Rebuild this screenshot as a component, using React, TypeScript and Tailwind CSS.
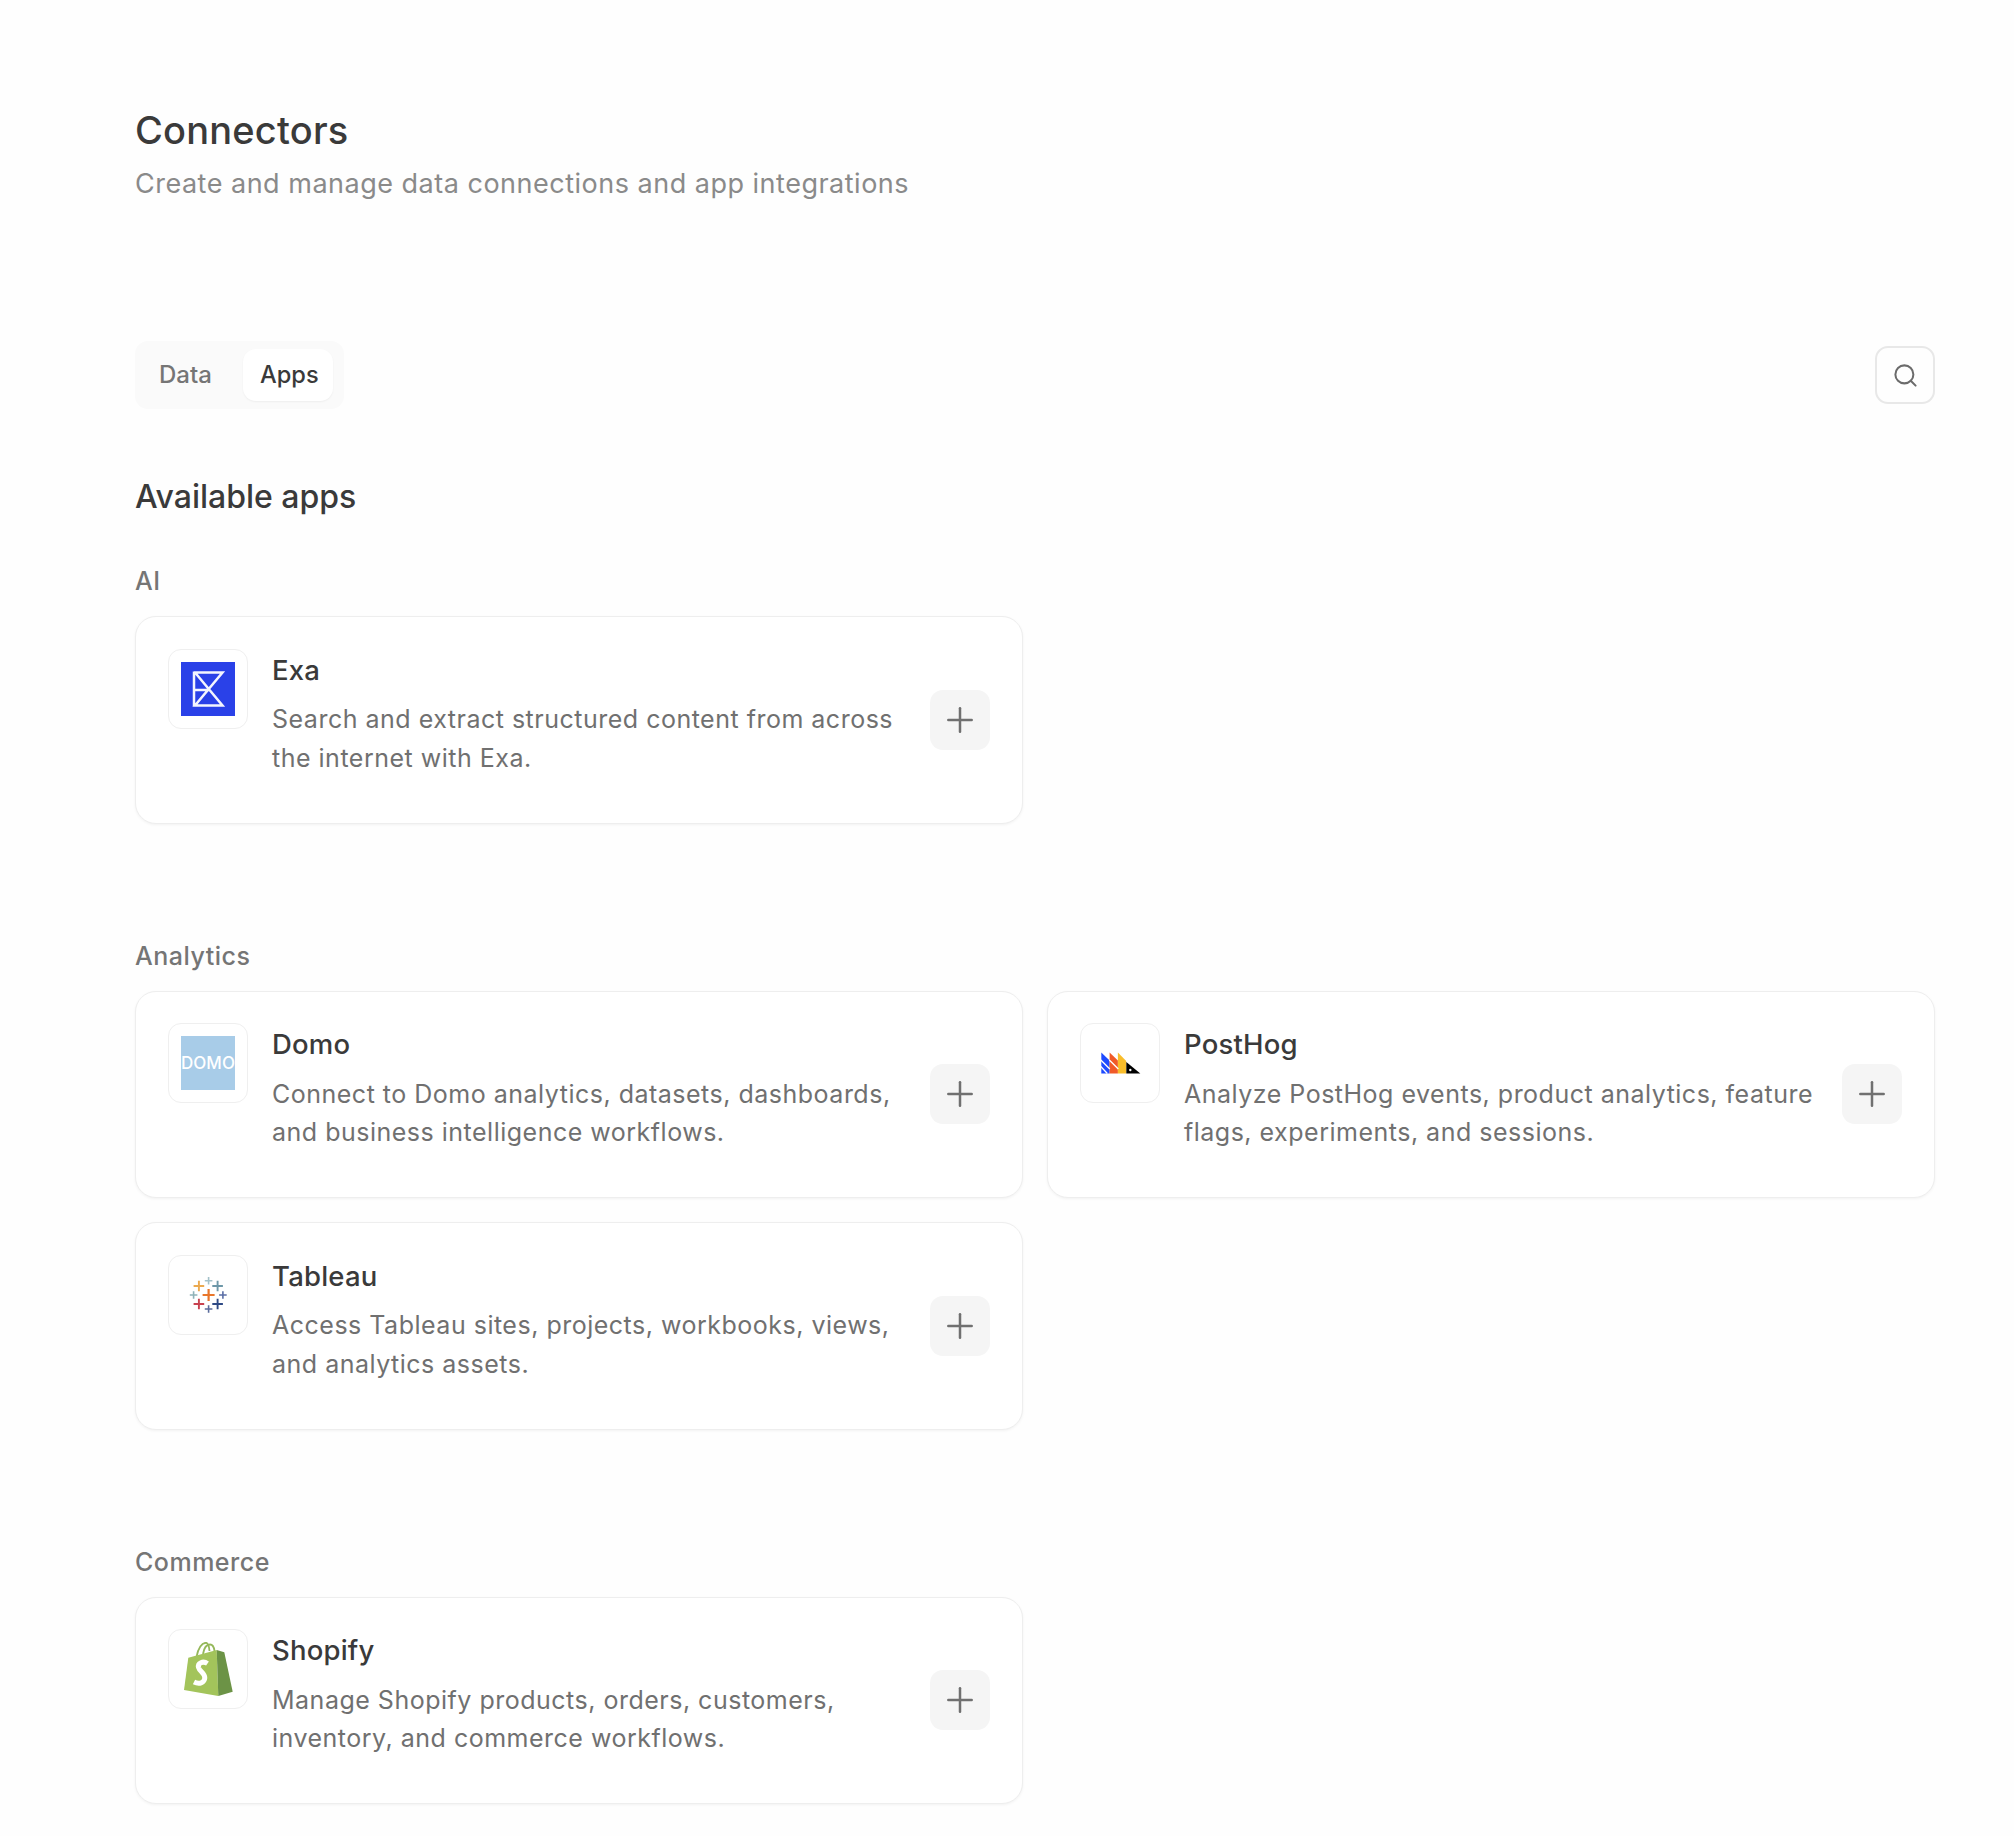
import { Plus, Search } from "lucide-react";
import type { ReactNode } from "react";

function ExaLogo() {
  return (
    <svg viewBox="0 0 54 54" className="h-full w-full">
      <rect width="54" height="54" fill="#2a41e8" />
      <path
        d="M13 10.5H41.5L14 43.5H41.5L14 10.5M13 9.4V44.6M13.5 28H28"
        fill="none"
        stroke="#f4f5fe"
        strokeWidth="2.5"
      />
    </svg>
  );
}

function DomoLogo() {
  return (
    <div className="flex h-full w-full items-center justify-center overflow-hidden bg-[#a8cce8]">
      <span className="text-[17px] leading-none font-medium text-white">DOMO</span>
    </div>
  );
}

function PostHogLogo() {
  return (
    <svg viewBox="-0.8 0 54 54" className="h-full w-full">
      <path d="M7.5 16.5L15.8 24.5V37.5H7.5Z" fill="#1d4aff" />
      <path d="M15.8 16.5L24.1 24.5V37.5H15.8Z" fill="#f05a28" />
      <path d="M24.1 16.5L32.4 25V37.5H24.1Z" fill="#f9bd2b" />
      <path d="M7 24L16 33M7 30.5L13.5 37.5M15.5 24L24.5 33" stroke="#fff" strokeWidth="1.3" />
      <path d="M32.5 26L46.5 37.5H32.5Z" fill="#000" />
      <circle cx="36.5" cy="34" r="1.2" fill="#fff" />
    </svg>
  );
}

const tableauCrosses = [
  { x: 27, y: 27, r: 6, w: 2.2, c: "#e8762b" },
  { x: 17.3, y: 18, r: 5.3, w: 1.9, c: "#eba94f" },
  { x: 27, y: 12.7, r: 3.8, w: 1.6, c: "#a3c1c9" },
  { x: 36, y: 18, r: 5.3, w: 1.9, c: "#6d97a8" },
  { x: 12, y: 27, r: 3.8, w: 1.6, c: "#8fb2b8" },
  { x: 41.3, y: 27, r: 3.8, w: 1.6, c: "#5a6ea5" },
  { x: 17.3, y: 36, r: 5.3, w: 1.9, c: "#c8424f" },
  { x: 36, y: 36, r: 5.3, w: 1.9, c: "#2e4a85" },
  { x: 27, y: 41, r: 3.8, w: 1.6, c: "#5b6c9c" },
];

function TableauLogo() {
  return (
    <svg viewBox="-0.6 0 54 54" className="h-full w-full">
      {tableauCrosses.map((p) => (
        <path
          key={`${p.x}-${p.y}`}
          d={`M${p.x - p.r} ${p.y}H${p.x + p.r}M${p.x} ${p.y - p.r}V${p.y + p.r}`}
          stroke={p.c}
          strokeWidth={p.w}
          fill="none"
        />
      ))}
    </svg>
  );
}

function ShopifyLogo() {
  return (
    <svg viewBox="0 0 54 54" className="h-full w-full">
      <path
        d="M15.5 15C17 6 21 0.8 25 0.8C27 0.8 28 3 28.5 9M22 12C23 6 25.5 2.5 29 2.5C32 2.5 33 5 33.5 9"
        fill="none"
        stroke="#95b85a"
        strokeWidth="1.8"
      />
      <path d="M3 48L7.3 15.7L35.7 8L37.3 54Z" fill="#a3c45b" />
      <path d="M35.7 8L43.3 10.3L51.7 49.7L37.3 54Z" fill="#6c9346" />
      <path
        d="M26.5 21.5C22 18.5 16.5 21 17.5 25.5C18.5 29.5 24 31 23.8 36C23.5 41 18 42.5 13 40"
        fill="none"
        stroke="#fff"
        strokeWidth="5"
      />
    </svg>
  );
}

interface AppCardProps {
  name: string;
  description: ReactNode;
  logo: ReactNode;
}

function AppCard({ name, description, logo }: AppCardProps) {
  return (
    <div className="flex h-[207.5px] items-center gap-[25px] rounded-[21px] border border-[#eeeeee] bg-white pr-8 pl-8 shadow-[0_1px_3px_rgba(0,0,0,0.05)]">
      <div className="flex min-w-0 flex-1 gap-[25px] self-start pt-[31.5px]">
        <div className="flex h-[80px] w-[80px] shrink-0 items-center justify-center rounded-[13px] border border-[#efefef] bg-white">
          <div className="h-[54px] w-[54px]">{logo}</div>
        </div>
        <div className="min-w-0 flex-1">
          <div className="-ml-[1px] text-[27.5px] leading-[42px] font-medium tracking-[0.2px] text-[#3a3a3a]">{name}</div>
          <p className="mt-[9.5px] -ml-[1px] text-[25px] leading-[38.6px] tracking-[0.5px] text-[#707070]">{description}</p>
        </div>
      </div>
      <button className="flex h-[60px] w-[60px] shrink-0 items-center justify-center rounded-[13px] bg-[#f5f5f5] text-[#707070]">
        <Plus size={40} strokeWidth={1.5} />
      </button>
    </div>
  );
}

function Section({ title, children }: { title: string; children: ReactNode }) {
  return (
    <section className="mb-[116px] last:mb-0">
      <div className="mb-[19px] text-[25px] leading-[32px] font-medium tracking-[0.5px] text-[#757575]">{title}</div>
      <div className="grid grid-cols-2 gap-6">{children}</div>
    </section>
  );
}

export default function App() {
  return (
    <div
      className="min-h-[1836px] bg-[#fefefe] pt-[105px] pr-[79px] pb-[31px] pl-[135px]"
      style={{ fontFamily: "Inter, sans-serif" }}
    >
      <h1 className="text-[38px] leading-[50px] font-medium tracking-[0.2px] text-[#3a3a3a]">Connectors</h1>
      <p className="mt-[9px] text-[27px] leading-[40px] tracking-[0.5px] text-[#8a8a8a]">
        Create and manage data connections and app integrations
      </p>

      <div className="mt-[137px] flex items-center justify-between">
        <div className="flex h-[68px] gap-[31px] rounded-[13px] bg-[#fafafa] py-2 pr-[11px] pl-2">
          <button className="flex items-center pl-4 text-[24px] font-medium text-[#757575]">Data</button>
          <button className="flex w-[90px] items-center justify-center rounded-[13px] bg-white pl-[3px] text-[23.6px] font-medium text-[#3a3a3a] shadow-[0_1px_2px_rgba(0,0,0,0.05)]">
            Apps
          </button>
        </div>
        <button className="flex h-[58px] w-[60px] items-center justify-center rounded-[13px] border-2 border-[#e8e8e8] text-[#6b6b6b]">
          <Search size={27} strokeWidth={1.8} />
        </button>
      </div>

      <h2 className="mt-[67px] text-[32px] leading-[42px] font-medium text-[#3a3a3a]">Available apps</h2>

      <div className="mt-[47px]">
        <Section title="AI">
          <AppCard
            name="Exa"
            logo={<ExaLogo />}
            description="Search and extract structured content from across the internet with Exa."
          />
        </Section>
        <Section title="Analytics">
          <AppCard
            name="Domo"
            logo={<DomoLogo />}
            description="Connect to Domo analytics, datasets, dashboards, and business intelligence workflows."
          />
          <AppCard
            name="PostHog"
            logo={<PostHogLogo />}
            description="Analyze PostHog events, product analytics, feature flags, experiments, and sessions."
          />
          <AppCard
            name="Tableau"
            logo={<TableauLogo />}
            description="Access Tableau sites, projects, workbooks, views, and analytics assets."
          />
        </Section>
        <Section title="Commerce">
          <AppCard
            name="Shopify"
            logo={<ShopifyLogo />}
            description="Manage Shopify products, orders, customers, inventory, and commerce workflows."
          />
        </Section>
      </div>
    </div>
  );
}
